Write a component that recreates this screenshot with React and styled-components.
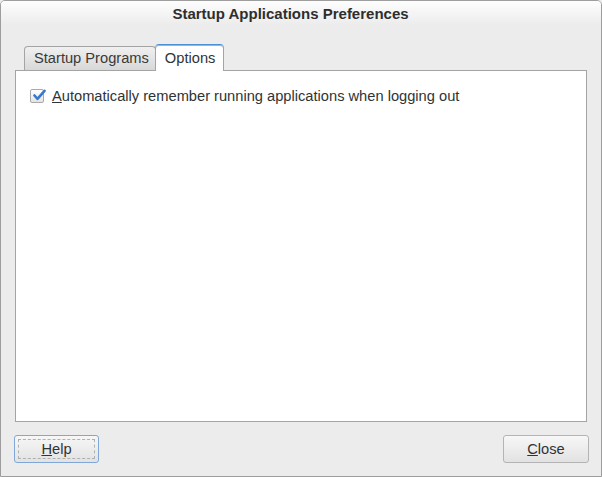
import React from 'react'
import styled, { createGlobalStyle } from 'styled-components'

const Global = createGlobalStyle`
  html, body {
    margin: 0;
    padding: 0;
    background: #ececec;
  }
  body {
    font-family: "Liberation Sans", Arial, sans-serif;
    font-size: 14.667px;
    color: #2e3436;
  }
`

const Window = styled.div`
  box-sizing: border-box;
  width: 602px;
  height: 477px;
  border: 1px solid #9d9d9d;
  border-radius: 5px 5px 0 0;
  background: #ececec;
  display: flex;
  flex-direction: column;
  overflow: hidden;
`

const TitleBar = styled.div`
  height: 24px;
  display: flex;
  align-items: center;
  justify-content: center;
  padding-right: 21px;
  background: linear-gradient(#fdfdfd, #ececec);
  font-weight: bold;
  font-size: 15px;
  color: #2e2e2e;
`

const Body = styled.div`
  flex: 1;
  display: flex;
  flex-direction: column;
  padding: 19px 14px 13px 13px;
`

const Tabs = styled.div`
  display: flex;
  align-items: flex-end;
  padding-left: 10px;
  height: 26px;
  position: relative;
  z-index: 1;
`

const Tab = styled.div`
  box-sizing: border-box;
  height: ${p => (p.$active ? '27px' : '24px')};
  padding: 0 ${p => (p.$active ? '8px' : '6px')} 0 9px;
  margin-left: ${p => (p.$active ? '-1px' : '0')};
  margin-bottom: ${p => (p.$active ? '-1px' : '0')};
  display: flex;
  align-items: center;
  padding-bottom: 1px;
  font-size: 14.667px;
  color: ${p => (p.$active ? '#2e3436' : '#3a3a3a')};
  border: 1px solid #a4a4a4;
  border-top-color: ${p => (p.$active ? '#4a90d9' : '#a4a4a4')};
  border-bottom: none;
  border-radius: 4px 4px 0 0;
  background: ${p => (p.$active ? '#ffffff' : 'linear-gradient(#f0f0f0, #d8d8d8)')};
  box-shadow: ${p => (p.$active ? 'inset 0 1px 0 #8cb8e8' : 'none')};
`

const Panel = styled.div`
  flex: 1;
  margin: 0 0 0 1px;
  background: #fff;
  border: 1px solid #a4a4a4;
  padding: 17px 14px;
`

const CheckRow = styled.label`
  display: flex;
  align-items: center;
  gap: 8px;
  font-size: 14.667px;
  color: #2e3436;
`

const Box = styled.span`
  box-sizing: border-box;
  width: 14px;
  height: 14px;
  border: 1px solid #a9a9a9;
  border-radius: 2px;
  background: linear-gradient(#ffffff, #e4e4e4);
  position: relative;
  display: inline-block;
  svg {
    position: absolute;
    left: 1px;
    top: -1px;
  }
`

const Footer = styled.div`
  display: flex;
  justify-content: space-between;
  margin-top: 13px;
`

const Button = styled.button`
  box-sizing: border-box;
  width: ${p => p.$w}px;
  height: 28px;
  font-family: "Liberation Sans", Arial, sans-serif;
  font-size: 14.667px;
  color: #2e3436;
  border: 1px solid ${p => (p.$focus ? '#7fa8d8' : '#b4b4b4')};
  border-radius: 3px;
  background: linear-gradient(#f7f7f7, #e2e2e2);
  padding: 3px;
  margin-right: ${p => p.$mr || 0}px;
  span.ring {
    display: flex;
    align-items: center;
    justify-content: center;
    height: 100%;
    box-sizing: border-box;
    border: 1px dashed ${p => (p.$focus ? '#b0b0b0' : 'transparent')};
  }
  u {
    text-decoration: underline;
  }
`

function Check() {
  return (
    <svg width="14" height="13" viewBox="0 0 14 13">
      <path d="M2.5 6.5 L5.5 9.8 L12.5 1.8" fill="none" stroke="#3a78c8" strokeWidth="2.6" strokeLinecap="round" strokeLinejoin="round" />
    </svg>
  )
}

export default function App() {
  return (
    <Window>
      <Global />
      <TitleBar>Startup Applications Preferences</TitleBar>
      <Body>
        <Tabs>
          <Tab>Startup Programs</Tab>
          <Tab $active>Options</Tab>
        </Tabs>
        <Panel>
          <CheckRow>
            <Box><Check /></Box>
            <span><u>A</u>utomatically remember running applications when logging out</span>
          </CheckRow>
        </Panel>
        <Footer>
          <Button $w={85} $focus><span className="ring"><u>H</u>elp</span></Button>
          <Button $w={86} $mr={-2}><span className="ring"><u>C</u>lose</span></Button>
        </Footer>
      </Body>
    </Window>
  )
}
